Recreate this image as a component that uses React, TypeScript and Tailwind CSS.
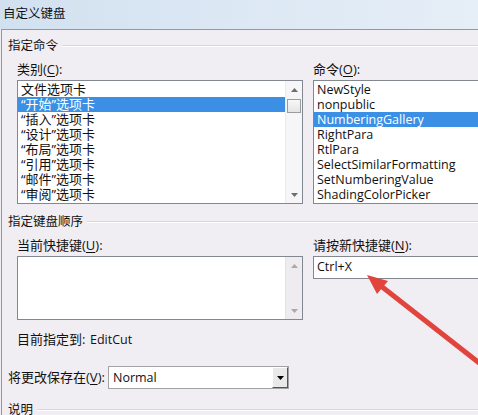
import React from 'react'

const cats = ['文件选项卡', '“开始”选项卡', '“插入”选项卡', '“设计”选项卡', '“布局”选项卡', '“引用”选项卡', '“邮件”选项卡', '“审阅”选项卡']
const cmds = ['NewStyle', 'nonpublic', 'NumberingGallery', 'RightPara', 'RtlPara', 'SelectSimilarFormatting', 'SetNumberingValue', 'ShadingColorPicker']

const font = { fontFamily: '"Open Sans", "Noto Sans CJK SC", sans-serif' }

function Acc({ pre, k, post = '):' }: { pre: string; k: string; post?: string }) {
  return (
    <span>
      {pre}(<span className="underline underline-offset-2">{k}</span>{post}
    </span>
  )
}

function GroupHeader({ text, className = '' }: { text: string; className?: string }) {
  return (
    <div className={`flex items-center h-[17px] ${className}`}>
      <span className="text-[12.5px] leading-[17px] pr-[4px]">{text}</span>
      <div className="flex-1 flex flex-col">
        <div className="h-px bg-[#d9d6dc]" />
        <div className="h-px bg-white" />
      </div>
    </div>
  )
}

function Tri({ up, color = '#6d6d6d' }: { up?: boolean; color?: string }) {
  return (
    <svg width="7" height="4" viewBox="0 0 7 4">
      <path d={up ? 'M0 4 L3.5 0 L7 4 Z' : 'M0 0 L7 0 L3.5 4 Z'} fill={color} />
    </svg>
  )
}

export default function App() {
  return (
    <div className="relative w-[478px] h-[415px] overflow-hidden bg-[#f1eef3] text-[#111]" style={font}>
      {/* Title bar */}
      <div className="h-[29px] flex items-center pl-[3px] bg-gradient-to-r from-[#d2e1f0] via-[#dce8f4] to-[#e6eef7] text-[12.5px]">
        自定义键盘
      </div>

      {/* Client area */}
      <div className="ml-px h-[386px] border-l border-t border-[#8f9aa6] pl-[6px] text-[13px]">
        <GroupHeader text="指定命令" className="mt-[7px]" />

        <div className="pl-[9px] flex gap-[10px] mt-[7px]">
          {/* Categories */}
          <div className="w-[286px] shrink-0">
            <div className="h-[17px] leading-[17px]"><Acc pre="类别" k="C" /></div>
            <div className="mt-[2px] h-[124px] border border-[#828790] bg-white flex">
              <div className="flex-1 pt-px">
                {cats.map((c, i) => (
                  <div
                    key={c}
                    className={`h-[15px] leading-[15px] pl-[3px] ${i === 1 ? 'bg-[#3b8fe4] text-white' : ''}`}
                  >
                    {c}
                  </div>
                ))}
              </div>
              <div className="w-[17px] bg-[#f6f5f7] border-l border-[#ebeaec] flex flex-col items-center">
                <div className="h-[15px] flex items-center justify-center pt-[3px]"><Tri up /></div>
                <div className="mt-[3px] w-[14px] h-[14px] border border-[#9b9b9b] bg-gradient-to-b from-[#f8f8f8] to-[#e4e4e4]" />
                <div className="flex-1" />
                <div className="h-[15px] flex items-center justify-center pb-[2px]"><Tri /></div>
              </div>
            </div>
          </div>

          {/* Commands */}
          <div className="w-[200px] shrink-0">
            <div className="h-[17px] leading-[17px]"><Acc pre="命令" k="O" /></div>
            <div className="mt-[2px] h-[124px] border border-[#828790] bg-white pt-px">
              {cmds.map((c, i) => (
                <div
                  key={c}
                  className={`h-[15px] leading-[15px] pl-[3px] text-[12.5px] ${i === 2 ? 'bg-[#3b8fe4] text-white' : ''}`}
                >
                  {c}
                </div>
              ))}
            </div>
          </div>
        </div>

        <GroupHeader text="指定键盘顺序" className="mt-[9px]" />

        <div className="pl-[9px] flex gap-[10px] mt-[7px]">
          <div className="w-[286px] shrink-0">
            <div className="h-[17px] leading-[17px]"><Acc pre="当前快捷键" k="U" /></div>
            <div className="mt-[2px] h-[64px] border border-[#828790] bg-white flex">
              <div className="flex-1" />
              <div className="w-[17px] bg-[#eeecf0] border-l border-[#e4e2e6] flex flex-col items-center">
                <div className="h-[15px] flex items-center justify-center pt-[3px]"><Tri up color="#a9a9a9" /></div>
                <div className="flex-1" />
                <div className="h-[15px] flex items-center justify-center pb-[2px]"><Tri color="#a9a9a9" /></div>
              </div>
            </div>
          </div>
          <div className="w-[200px] shrink-0">
            <div className="h-[17px] leading-[17px]"><Acc pre="请按新快捷键" k="N" /></div>
            <div className="mt-[2px] h-[23px] border border-[#828790] bg-white pl-[3px] leading-[20px] text-[12.5px]">
              Ctrl+X
            </div>
          </div>
        </div>

        <div className="pl-[9px] mt-[11px] h-[17px] leading-[17px] flex">
          <span className="w-[73px]">目前指定到:</span>
          <span className="text-[12.5px]">EditCut</span>
        </div>

        <div className="mt-[18px] flex items-center">
          <span className="w-[100px] leading-[17px]"><Acc pre="将更改保存在" k="V" /></span>
          <div className="w-[181px] h-[23px] border border-[#a3a3a3] bg-white flex items-stretch">
            <div className="flex-1 pl-[4px] leading-[21px] text-[12.5px]">Normal</div>
            <div className="w-[16px] border-l border-t border-white border-r border-b border-r-[#555] border-b-[#555] bg-[#e9e9e9] flex items-center justify-center">
              <Tri color="#000" />
            </div>
          </div>
        </div>

        <GroupHeader text="说明" className="mt-[12px]" />
      </div>

      {/* Red annotation arrow */}
      <svg className="absolute left-0 top-0 pointer-events-none" width="478" height="415">
        <line x1="381" y1="286" x2="492" y2="373" stroke="#e0443c" strokeWidth="5" strokeLinecap="round" />
        <polygon points="367,275 388,281 377,294" fill="#e0443c" />
      </svg>
    </div>
  )
}
